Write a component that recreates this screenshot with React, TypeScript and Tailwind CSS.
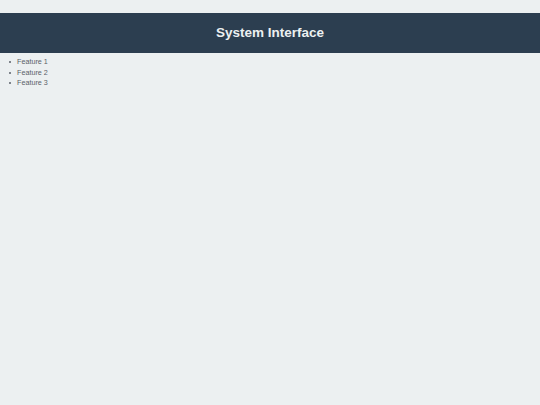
const features = ["Feature 1", "Feature 2", "Feature 3"];

export default function App() {
  return (
    <div className="min-h-[405px] bg-[#ecf0f1] pt-[13px] font-['Liberation_Sans',Arial,sans-serif]">
      <header className="h-[40px] bg-[#2c3e50] flex items-center justify-center">
        <h1 className="text-[13.5px] font-bold text-[#ecf0f1]">System Interface</h1>
      </header>
      <ul className="pl-[9px] pt-[4px] text-[7.2px] leading-[10.5px] text-[#5a6068]">
        {features.map((f) => (
          <li key={f} className="flex items-center">
            <span className="w-[2px] h-[2px] bg-[#5a6068] rounded-full mr-[6px]" />
            {f}
          </li>
        ))}
      </ul>
    </div>
  );
}
